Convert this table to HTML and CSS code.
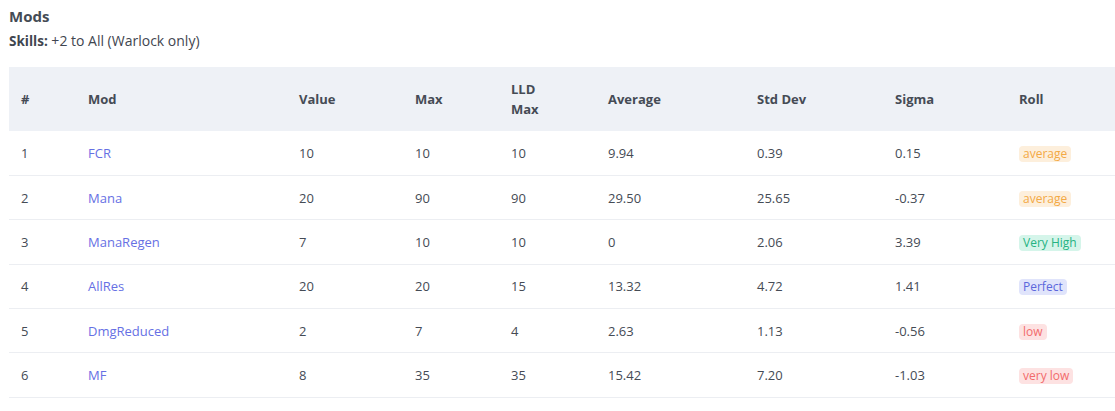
FILE: index.html
```html
<!DOCTYPE html>
<html>
<head>
<meta charset="utf-8">
<link rel="stylesheet" href="styles.css">
</head>
<body>
<section class="mods">
  <h2 class="title">Mods</h2>
  <p class="skills"><b>Skills:</b> +2 to All (Warlock only)</p>
  <table class="grid">
    <colgroup>
      <col class="c1"><col class="c2"><col class="c3"><col class="c4"><col class="c5"><col class="c6"><col class="c7"><col class="c8"><col class="c9">
    </colgroup>
    <thead>
      <tr><th>#</th><th>Mod</th><th>Value</th><th>Max</th><th>LLD<br>Max</th><th>Average</th><th>Std Dev</th><th>Sigma</th><th>Roll</th></tr>
    </thead>
    <tbody>
      <tr><td>1</td><td><a class="mod">FCR</a></td><td>10</td><td>10</td><td>10</td><td>9.94</td><td>0.39</td><td>0.15</td><td><span class="badge avg">average</span></td></tr>
      <tr><td>2</td><td><a class="mod">Mana</a></td><td>20</td><td>90</td><td>90</td><td>29.50</td><td>25.65</td><td>-0.37</td><td><span class="badge avg">average</span></td></tr>
      <tr><td>3</td><td><a class="mod">ManaRegen</a></td><td>7</td><td>10</td><td>10</td><td>0</td><td>2.06</td><td>3.39</td><td><span class="badge high">Very High</span></td></tr>
      <tr><td>4</td><td><a class="mod">AllRes</a></td><td>20</td><td>20</td><td>15</td><td>13.32</td><td>4.72</td><td>1.41</td><td><span class="badge perfect">Perfect</span></td></tr>
      <tr><td>5</td><td><a class="mod">DmgReduced</a></td><td>2</td><td>7</td><td>4</td><td>2.63</td><td>1.13</td><td>-0.56</td><td><span class="badge low">low</span></td></tr>
      <tr><td>6</td><td><a class="mod">MF</a></td><td>8</td><td>35</td><td>35</td><td>15.42</td><td>7.20</td><td>-1.03</td><td><span class="badge low">very low</span></td></tr>
    </tbody>
  </table>
</section>
</body>
</html>
```
FILE: styles.css
```css
html, body { margin: 0; padding: 0; background: #fff; }
body {
  font-family: "Open Sans", "DejaVu Sans", sans-serif;
  color: #454b55;
  font-size: 13px;
}
.mods { padding: 6px 0 0 9px; }
.title {
  margin: 0;
  font-size: 15px;
  font-weight: 700;
  color: #454b55;
  line-height: 20px;
}
.skills {
  margin: 6px 0 0 0;
  font-size: 14px;
  line-height: 18px;
  color: #3f4650;
}
.skills b { font-weight: 700; font-size: 13.5px; }
.grid {
  margin-top: 17px;
  width: 1106px;
  border-collapse: collapse;
  table-layout: fixed;
}
.c1 { width: 67px; } .c2 { width: 211px; } .c3 { width: 116px; }
.c4 { width: 96px; } .c5 { width: 97px; } .c6 { width: 149px; }
.c7 { width: 138px; } .c8 { width: 124px; } .c9 { width: 108px; }
thead tr { background: #eef1f6; height: 64px; }
th {
  text-align: left;
  font-weight: 700;
  font-size: 13px;
  line-height: 20px;
  padding: 0 12px;
  color: #454b55;
}
tbody tr { height: 44.4px; border-bottom: 1px solid #eceef2; }
td {
  padding: 0 12px;
  font-size: 13px;
  line-height: 18px;
  color: #454b55;
}
.mod { color: #6670e4; text-decoration: none; }
.badge {
  display: inline-block;
  font-size: 12px;
  line-height: 16px;
  padding: 0 4px;
  border-radius: 4px;
}
.avg { background: #fdefdc; color: #f3a944; }
.high { background: #d5f5ea; color: #25b382; }
.perfect { background: #e0e4fb; color: #5b67dc; }
.low { background: #fde2e2; color: #f26b6b; }
```
